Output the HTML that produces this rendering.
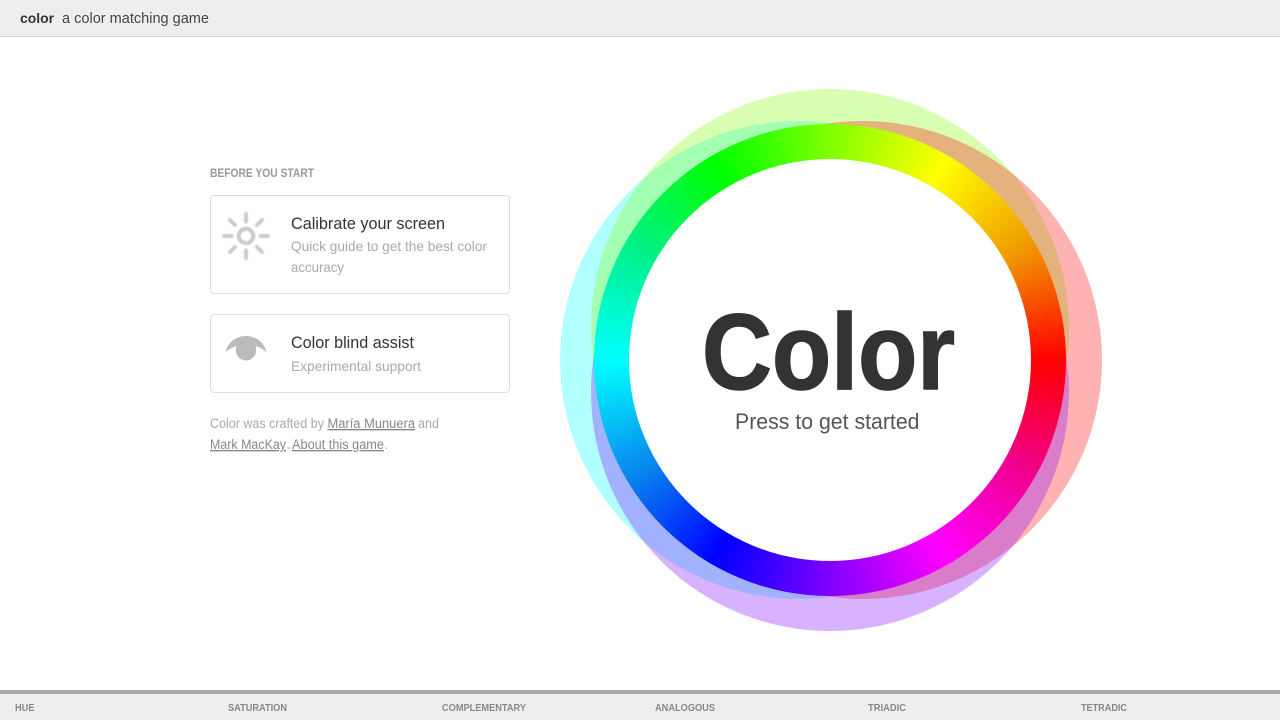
<!DOCTYPE html>
<html lang="en">
<head>
<meta charset="utf-8">
<title>color - a color matching game</title>
<style>
html,body{margin:0;padding:0;width:1280px;height:720px;overflow:hidden;background:#fff;}
body{position:relative;font-family:"Liberation Sans",sans-serif;}
.top{position:absolute;left:0;top:0;width:1280px;height:36px;background:#eee;border-bottom:1px solid #ccc;}
.bottom{position:absolute;left:0;top:690px;width:1280px;height:26px;background:#eee;border-top:4px solid #aaa;}
.card{position:absolute;left:210px;width:298px;background:#fff;border:1px solid #ddd;border-radius:4px;}
.c{position:absolute;border-radius:50%;width:478px;height:478px;}
.ring{position:absolute;left:594px;top:124px;width:472px;height:472px;border-radius:50%;
background:conic-gradient(from 30deg,#ff0 0deg,#f09a00 30deg,#f00 60deg,#f00090 90deg,#f0f 120deg,#8000ff 150deg,#00f 180deg,#0888ee 210deg,#0ff 240deg,#00f088 270deg,#0f0 300deg,#80ff00 330deg,#ff0 360deg);}
.hole{position:absolute;left:629px;top:159px;width:402px;height:402px;border-radius:50%;background:#fff;}
svg.ov{position:absolute;left:0;top:0;}
</style>
</head>
<body>
<div class="top"></div>
<div class="bottom"></div>
<div class="card" style="top:195px;height:97px"></div>
<div class="card" style="top:314px;height:77px"></div>

<div class="c" style="left:560px;top:121px;background:rgba(0,255,255,.3)"></div>
<div class="c" style="left:591px;top:89px;background:rgba(128,255,0,.3)"></div>
<div class="c" style="left:624px;top:121px;background:rgba(255,0,0,.3)"></div>
<div class="c" style="left:591px;top:153px;background:rgba(128,0,255,.3)"></div>
<div class="ring"></div>
<div class="hole"></div>

<svg class="ov" width="1280" height="720" viewBox="0 0 1280 720" xmlns="http://www.w3.org/2000/svg" font-family="'Liberation Sans',sans-serif">
  <g stroke="#ccc" fill="none" style="filter:blur(.4px)">
    <circle cx="246" cy="236" r="7.200" stroke-width="4"/>
    <path stroke-width="4" stroke-linecap="round" d="M246 214V221.500M246 250.500V258M224 236H231.500M260.500 236H268M230 220L235 225M257 247L262 252M262 220L257 225M235 247L230 252"/>
  </g>
  <path fill="#bbb" style="filter:blur(.3px)" d="M225.500 352C228 342 236 336 246 336C256 336 264 342 266.500 352C263 349 259 347 255.700 346C255.900 347.500 256 349 256 351C256 356 251.500 360.500 246 360.500C240.500 360.500 236 356 236 351C236 349 236.100 347.500 236.300 346C233 347 229 349 225.500 352Z"/>

  <text x="20" y="23" font-size="14" font-weight="700" fill="#333" textLength="34" lengthAdjust="spacingAndGlyphs">color</text>
  <text x="62" y="23" font-size="15" fill="#444" textLength="147" lengthAdjust="spacingAndGlyphs">a color matching game</text>

  <text x="210" y="177" font-size="11.500" font-weight="700" fill="#999" textLength="104" lengthAdjust="spacingAndGlyphs">BEFORE YOU START</text>

  <text x="291" y="229" font-size="17" fill="#333" textLength="154" lengthAdjust="spacingAndGlyphs">Calibrate your screen</text>
  <text x="291" y="251" font-size="14" fill="#aaa" textLength="196" lengthAdjust="spacingAndGlyphs">Quick guide to get the best color</text>
  <text x="291" y="272" font-size="14" fill="#aaa" textLength="53" lengthAdjust="spacingAndGlyphs">accuracy</text>

  <text x="291" y="348" font-size="17" fill="#333" textLength="123" lengthAdjust="spacingAndGlyphs">Color blind assist</text>
  <text x="291" y="371" font-size="14" fill="#aaa" textLength="130" lengthAdjust="spacingAndGlyphs">Experimental support</text>

  <text x="210" y="428" font-size="13.500" fill="#aaa" textLength="114" lengthAdjust="spacingAndGlyphs">Color was crafted by</text>
  <text x="327.500" y="428" font-size="13.500" fill="#888" text-decoration="underline" textLength="87.500" lengthAdjust="spacingAndGlyphs">María Munuera</text>
  <text x="418" y="428" font-size="13.500" fill="#aaa" textLength="21" lengthAdjust="spacingAndGlyphs">and</text>
  <text x="210" y="449" font-size="13.500" fill="#888" text-decoration="underline" textLength="76" lengthAdjust="spacingAndGlyphs">Mark MacKay</text>
  <text x="287" y="449" font-size="13.500" fill="#aaa">.</text>
  <text x="292" y="449" font-size="13.500" fill="#888" text-decoration="underline" textLength="92" lengthAdjust="spacingAndGlyphs">About this game</text>
  <text x="384.500" y="449" font-size="13.500" fill="#aaa">.</text>

  <text x="702" y="389" font-size="108" font-weight="700" fill="#333" stroke="#333" stroke-width="1.500" textLength="253" lengthAdjust="spacingAndGlyphs">Color</text>
  <text x="735" y="429" font-size="22.500" fill="#555" textLength="184.500" lengthAdjust="spacingAndGlyphs">Press to get started</text>

  <g font-size="10.500" font-weight="700" fill="#888">
    <text x="15" y="711" textLength="19.500" lengthAdjust="spacingAndGlyphs">HUE</text>
    <text x="228" y="711" textLength="59" lengthAdjust="spacingAndGlyphs">SATURATION</text>
    <text x="442" y="711" textLength="84" lengthAdjust="spacingAndGlyphs">COMPLEMENTARY</text>
    <text x="655" y="711" textLength="60" lengthAdjust="spacingAndGlyphs">ANALOGOUS</text>
    <text x="868" y="711" textLength="38" lengthAdjust="spacingAndGlyphs">TRIADIC</text>
    <text x="1081" y="711" textLength="46" lengthAdjust="spacingAndGlyphs">TETRADIC</text>
  </g>
</svg>
</body>
</html>
